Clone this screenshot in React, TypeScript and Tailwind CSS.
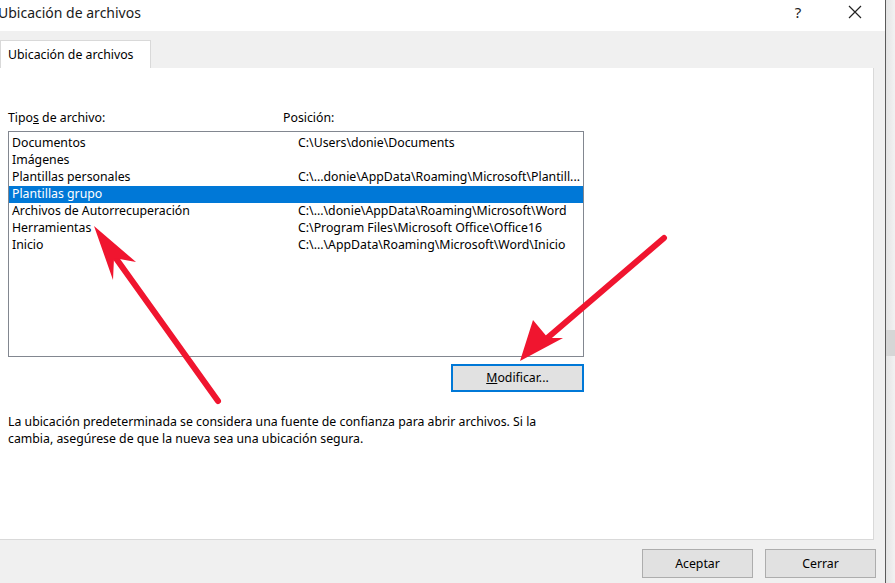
import React from 'react';

const font = { fontFamily: '"Segoe UI", "Noto Sans", "Open Sans", sans-serif' };

const rows = [
  { name: 'Documentos', path: 'C:\\Users\\donie\\Documents' },
  { name: 'Imágenes', path: '' },
  { name: 'Plantillas personales', path: 'C:\\...donie\\AppData\\Roaming\\Microsoft\\Plantill...' },
  { name: 'Plantillas grupo', path: '', selected: true },
  { name: 'Archivos de Autorrecuperación', path: 'C:\\...\\donie\\AppData\\Roaming\\Microsoft\\Word' },
  { name: 'Herramientas', path: 'C:\\Program Files\\Microsoft Office\\Office16' },
  { name: 'Inicio', path: 'C:\\...\\AppData\\Roaming\\Microsoft\\Word\\Inicio' },
];

const Arrows = () => (
  <svg className="absolute left-0 top-0 pointer-events-none" width="895" height="583" viewBox="0 0 895 583">
    <line x1="218" y1="401" x2="110" y2="250" stroke="#f0152f" strokeWidth="6" strokeLinecap="round" />
    <polygon points="94,226 136,262 114,258 113,280" fill="#f0152f" />
    <line x1="664" y1="238" x2="545" y2="340" stroke="#f0152f" strokeWidth="6" strokeLinecap="round" />
    <polygon points="520,361 533,320 548,338 563,338" fill="#f0152f" />
  </svg>
);

export default function App() {
  return (
    <div className="relative flex h-[583px] w-[895px] overflow-hidden bg-white text-[12.3px] text-black" style={font}>
      <div className="flex h-full w-[885px] flex-col">
        <div className="flex h-[31px] shrink-0 items-start bg-white pt-[2px]">
          <span className="-ml-[2px] text-[14px] text-[#1a1a1a]">Ubicación de archivos</span>
          <div className="ml-auto flex items-center">
            <span className="w-[20px] text-center text-[15px] leading-[20px] text-[#222]">?</span>
            <svg className="ml-[40px] mr-[23px]" width="14" height="14" viewBox="0 0 14 14">
              <path d="M1 1L13 13M13 1L1 13" stroke="#222" strokeWidth="1.2" />
            </svg>
          </div>
        </div>
        <div className="flex flex-1 flex-col bg-[#f0f0f0]">
          <div className="flex pt-[9px]">
            <div className="flex h-[28px] w-[151px] items-center border-x border-t border-[#d9d9d9] bg-white pl-[7px] pt-[2px]">
              Ubicación de archivos
            </div>
          </div>
          <div className="flex h-[472px] w-[874px] flex-col border-r border-b border-[#d9d9d9] bg-white px-[8px]">
            <div className="mt-[42px] flex h-[16px] items-center">
              <span className="w-[275px]">
                Tipo<span className="underline">s</span> de archivo:
              </span>
              <span>Posición:</span>
            </div>
            <div className="mt-[5px] h-[226px] w-[576px] overflow-hidden border border-[#828790] pt-[3px]">
              {rows.map((r) => (
                <div
                  key={r.name}
                  className={`flex h-[17px] items-center ${r.selected ? 'bg-[#0078d7] text-white' : ''}`}
                >
                  <span className="w-[289px] shrink-0 pl-[3px]">{r.name}</span>
                  <span className="whitespace-nowrap">{r.path}</span>
                </div>
              ))}
            </div>
            <div className="mt-[7px] flex w-[576px] justify-end">
              <button className="h-[28px] w-[133px] border-2 border-[#0078d7] bg-[#e1e1e1]">
                <span className="underline">M</span>odificar...
              </button>
            </div>
            <p className="mt-[21px] w-[560px] leading-[17px]">
              La ubicación predeterminada se considera una fuente de confianza para abrir archivos. Si la cambia,
              asegúrese de que la nueva sea una ubicación segura.
            </p>
          </div>
          <div className="flex justify-end gap-[12px] pr-[9px] pt-[9px]">
            <button className="h-[29px] w-[111px] border border-[#adadad] bg-[#e1e1e1] pt-[1px]">Aceptar</button>
            <button className="h-[29px] w-[111px] border border-[#adadad] bg-[#e1e1e1] pt-[1px]">Cerrar</button>
          </div>
        </div>
      </div>
      <div className="h-full w-[1px] bg-[#5a5a5a]" />
      <div className="flex h-full flex-1 flex-col bg-gradient-to-r from-[#e4e4e4] to-[#f2f2f2]">
        <div className="mt-[330px] h-[26px] bg-[#d6d6d6]" />
      </div>
      <Arrows />
    </div>
  );
}
